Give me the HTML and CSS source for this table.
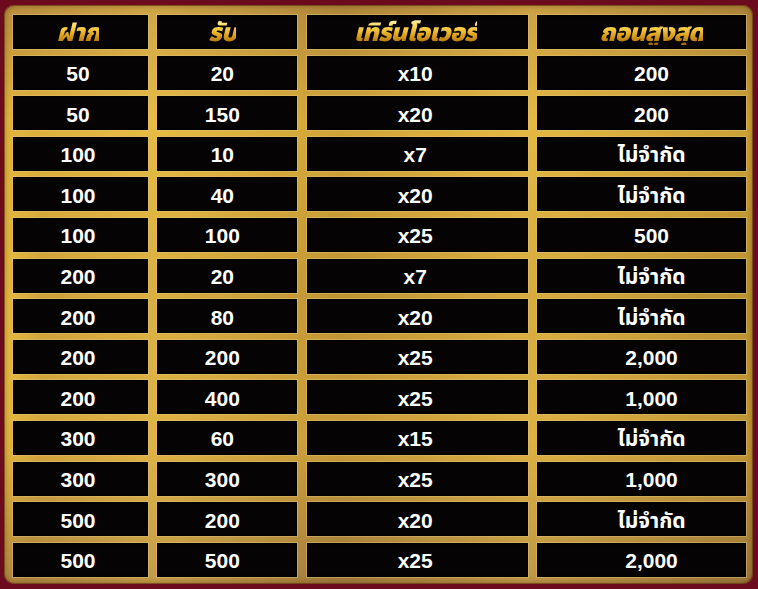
FILE: index.html
```html
<!DOCTYPE html>
<html lang="th">
<head>
<meta charset="utf-8">
<title>ตารางโปรโมชั่น</title>
<link rel="stylesheet" href="styles.css">
</head>
<body>
<div class="board">
  <div class="grid">
    <div class="cell head c1"><span class="gold">ฝาก</span></div>
    <div class="cell head c2"><span class="gold">รับ</span></div>
    <div class="cell head c3"><span class="gold">เทิร์นโอเวอร์</span></div>
    <div class="cell head c4"><span class="gold">ถอนสูงสุด</span></div>

    <div class="cell c1">50</div><div class="cell c2">20</div><div class="cell c3">x10</div><div class="cell c4">200</div>
    <div class="cell c1">50</div><div class="cell c2">150</div><div class="cell c3">x20</div><div class="cell c4">200</div>
    <div class="cell c1">100</div><div class="cell c2">10</div><div class="cell c3">x7</div><div class="cell c4">ไม่จำกัด</div>
    <div class="cell c1">100</div><div class="cell c2">40</div><div class="cell c3">x20</div><div class="cell c4">ไม่จำกัด</div>
    <div class="cell c1">100</div><div class="cell c2">100</div><div class="cell c3">x25</div><div class="cell c4">500</div>
    <div class="cell c1">200</div><div class="cell c2">20</div><div class="cell c3">x7</div><div class="cell c4">ไม่จำกัด</div>
    <div class="cell c1">200</div><div class="cell c2">80</div><div class="cell c3">x20</div><div class="cell c4">ไม่จำกัด</div>
    <div class="cell c1">200</div><div class="cell c2">200</div><div class="cell c3">x25</div><div class="cell c4">2,000</div>
    <div class="cell c1">200</div><div class="cell c2">400</div><div class="cell c3">x25</div><div class="cell c4">1,000</div>
    <div class="cell c1">300</div><div class="cell c2">60</div><div class="cell c3">x15</div><div class="cell c4">ไม่จำกัด</div>
    <div class="cell c1">300</div><div class="cell c2">300</div><div class="cell c3">x25</div><div class="cell c4">1,000</div>
    <div class="cell c1">500</div><div class="cell c2">200</div><div class="cell c3">x20</div><div class="cell c4">ไม่จำกัด</div>
    <div class="cell c1">500</div><div class="cell c2">500</div><div class="cell c3">x25</div><div class="cell c4">2,000</div>
  </div>
</div>
</body>
</html>
```

FILE: styles.css
```css
html, body {
  margin: 0;
  padding: 0;
}

body {
  width: 758px;
  height: 589px;
  overflow: hidden;
  background: #6c0b1e;
  font-family: "Liberation Sans", "Noto Sans Thai", "Noto Sans", "DejaVu Sans", sans-serif;
}

.board {
  margin: 5px 5px 5px 4px;
  padding: 10px 7px 7px 9px;
  border-radius: 10px;
  background:
    radial-gradient(ellipse 40px 300px at 0% 55%, rgba(255, 215, 70, 0.55), rgba(255, 215, 70, 0) 100%),
    linear-gradient(90deg, rgba(0,0,0,0) 0%, rgba(255, 220, 90, 0.3) 20%, rgba(0,0,0,0.05) 45%, rgba(255, 220, 90, 0.25) 70%, rgba(0,0,0,0.08) 100%),
    linear-gradient(180deg, #b98d3e 0%, #dcae3a 20%, #c99c36 50%, #d2a33a 75%, #a88040 100%);
  box-shadow: inset 0 0 0 1px rgba(90, 50, 10, 0.6), inset 0 0 6px rgba(80, 40, 0, 0.5);
}

.grid {
  display: grid;
  grid-template-columns: 135px 140px 221px 209px;
  grid-template-rows: repeat(14, 34px);
  column-gap: 9.33px;
  row-gap: 6.6px;
}

.cell {
  display: flex;
  align-items: center;
  justify-content: center;
  background: #050304;
  box-shadow: 0 0 0 1px rgba(225, 195, 130, 0.45), inset 0 0 3px rgba(0, 0, 0, 0.8);
  color: #ffffff;
  font-weight: 700;
  font-size: 21px;
  line-height: 1;
  padding-top: 2px;
  box-sizing: border-box;
}

.c1 { padding-right: 5px; }
.c2 { padding-right: 10px; }
.c3 { padding-right: 4px; }
.c4 { padding-left: 20px; }

.head {
  padding-top: 0;
}

.gold {
  font-style: italic;
  font-weight: 900;
  font-size: 25px;
  letter-spacing: -0.8px;
  background: linear-gradient(180deg, #fff3a8 0%, #f7cc45 35%, #dca01c 62%, #a06810 100%);
  -webkit-background-clip: text;
  background-clip: text;
  color: transparent;
}
```
